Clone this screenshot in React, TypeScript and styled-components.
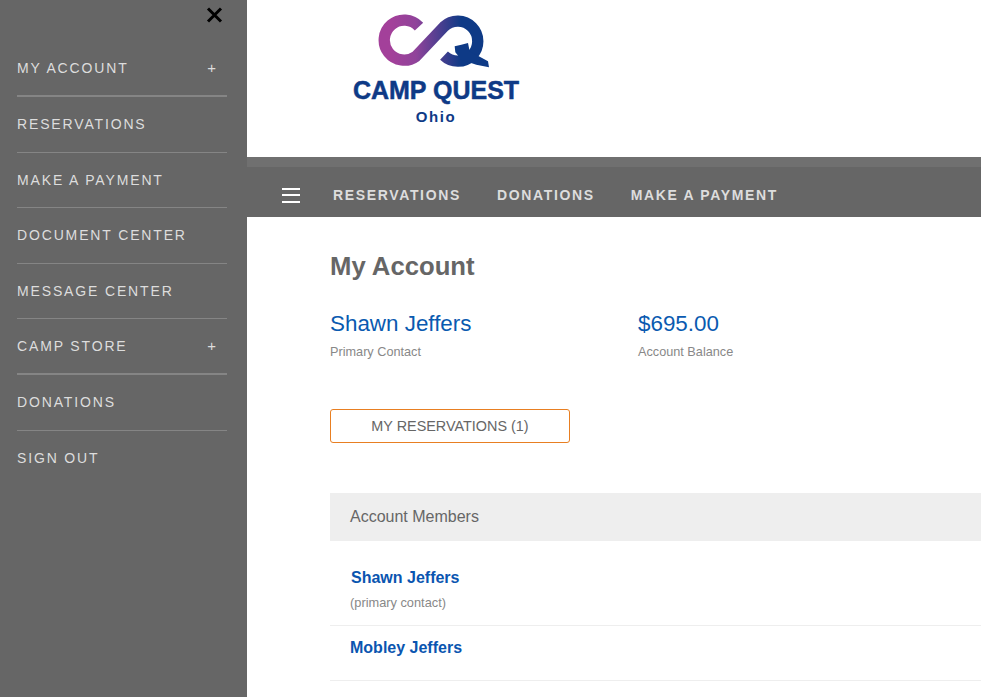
import type { FC } from "react";
import styled, { createGlobalStyle } from "styled-components";

const GlobalStyle = createGlobalStyle`
  html, body {
    margin: 0;
    padding: 0;
    height: 100%;
    overflow: hidden;
    background: #fff;
    font-family: "Liberation Sans", Arial, sans-serif;
  }
  * { box-sizing: border-box; }
`;

const sideItems = [
  { label: "MY ACCOUNT", expandable: true },
  { label: "RESERVATIONS" },
  { label: "MAKE A PAYMENT" },
  { label: "DOCUMENT CENTER" },
  { label: "MESSAGE CENTER" },
  { label: "CAMP STORE", expandable: true },
  { label: "DONATIONS" },
  { label: "SIGN OUT", last: true },
];

const LogoMark: FC = () => (
  <svg width="112" height="62" viewBox="0 0 336 186" aria-hidden="true">
    <defs>
      <linearGradient id="cq" gradientUnits="userSpaceOnUse" x1="40" y1="0" x2="250" y2="0">
        <stop offset="0" stopColor="#a3409a" />
        <stop offset="0.35" stopColor="#90439a" />
        <stop offset="1" stopColor="#0e3a86" />
      </linearGradient>
    </defs>
    <path
      d="M123 38 A60 60 0 1 0 114 127 L198 38 A60 60 0 1 1 198 125"
      fill="none"
      stroke="url(#cq)"
      strokeWidth="34"
    />
    <path
      d="M230 97 L250 92 L270 87 L275 112 L330 142 L333 160 L295 152 L250 137 L232 115 Z"
      fill="#0e3a86"
    />
  </svg>
);

const App: FC = () => {
  return (
    <Page>
      <GlobalStyle />
      <Sidebar>
        <CloseRow>
          <svg width="17" height="16" viewBox="0 0 17 16" aria-hidden="true">
            <path d="M2 1.5 L15 14.5 M15 1.5 L2 14.5" stroke="#000" strokeWidth="3" fill="none" />
          </svg>
        </CloseRow>
        {sideItems.map((item) => (
          <SideItem key={item.label} $expandable={item.expandable} $last={item.last}>
            <span>{item.label}</span>
            {item.expandable && <Plus>+</Plus>}
          </SideItem>
        ))}
      </Sidebar>

      <Main>
        <Header>
          <Logo>
            <LogoMark />
            <LogoName>CAMP QUEST</LogoName>
            <LogoState>Ohio</LogoState>
          </Logo>
        </Header>
        <Band />
        <NavBar>
          <Burger>
            <i />
            <i />
            <i />
          </Burger>
          <NavLink>RESERVATIONS</NavLink>
          <NavLink>DONATIONS</NavLink>
          <NavLink>MAKE A PAYMENT</NavLink>
        </NavBar>

        <Content>
          <Title>My Account</Title>
          <Stats>
            <Stat>
              <StatValue>Shawn Jeffers</StatValue>
              <StatLabel>Primary Contact</StatLabel>
            </Stat>
            <Stat>
              <StatValue>$695.00</StatValue>
              <StatLabel>Account Balance</StatLabel>
            </Stat>
          </Stats>
          <OutlineButton>MY RESERVATIONS (1)</OutlineButton>
          <SectionHead>Account Members</SectionHead>
          <MemberRow $height={85}>
            <MemberName $indent={21}>Shawn Jeffers</MemberName>
            <MemberNote>(primary contact)</MemberNote>
          </MemberRow>
          <MemberRow $height={55}>
            <MemberName $indent={20}>Mobley Jeffers</MemberName>
          </MemberRow>
        </Content>
      </Main>
    </Page>
  );
};

export default App;

const Page = styled.div`
  display: flex;
  width: 981px;
  height: 697px;
  overflow: hidden;
`;

const Sidebar = styled.aside`
  flex: 0 0 247px;
  background: #666;
  padding: 0 20px 0 17px;
`;

const CloseRow = styled.div`
  height: 41px;
  display: flex;
  justify-content: flex-end;
  align-items: flex-start;
  padding-top: 7px;
  padding-right: 4px;
`;

const SideItem = styled.div<{ $expandable?: boolean; $last?: boolean }>`
  height: ${(p) => (p.$expandable ? "56px" : "55.5px")};
  display: flex;
  align-items: center;
  justify-content: space-between;
  padding-right: 11px;
  color: #ddd;
  font-size: 14px;
  letter-spacing: 1.85px;
  border-bottom: ${(p) => (p.$last ? "none" : p.$expandable ? "2px solid #858585" : "1px solid #858585")};
`;

const Plus = styled.span`
  font-size: 15px;
  line-height: 14px;
  letter-spacing: 0;
`;

const Main = styled.main`
  flex: 1;
  min-width: 0;
`;

const Header = styled.header`
  height: 157px;
  padding: 14px 0 0 106px;
`;

const Logo = styled.div`
  width: 166px;
  display: flex;
  flex-direction: column;
  align-items: center;
  color: #0e3a86;
  font-weight: 700;
  & > svg {
    margin-left: -4px;
  }
`;

const LogoName = styled.div`
  margin-top: 1px;
  font-size: 25px;
  line-height: 26px;
  letter-spacing: 0;
  white-space: nowrap;
  -webkit-text-stroke: 0.5px #0e3a86;
`;

const LogoState = styled.div`
  margin-top: 5px;
  font-size: 15px;
  line-height: 18px;
  letter-spacing: 1.6px;
`;

const Band = styled.div`
  height: 10px;
  background: #707070;
`;

const NavBar = styled.nav`
  height: 50px;
  background: #666;
  display: flex;
  align-items: center;
  padding: 6px 0 0 35px;
  gap: 36px;
`;

const Burger = styled.div`
  width: 18px;
  margin-right: -3px;
  display: flex;
  flex-direction: column;
  gap: 4.5px;
  & > i {
    display: block;
    height: 2px;
    background: #fff;
  }
`;

const NavLink = styled.span`
  color: #ddd;
  font-size: 14px;
  font-weight: 700;
  letter-spacing: 1.65px;
`;

const Content = styled.div`
  padding: 32px 0 0 83px;
`;

const Title = styled.h1`
  margin: 0;
  font-size: 25.7px;
  line-height: 34px;
  font-weight: 700;
  color: #666;
`;

const Stats = styled.div`
  display: flex;
  margin-top: 27px;
`;

const Stat = styled.div`
  width: 308px;
`;

const StatValue = styled.div`
  font-size: 22.4px;
  line-height: 28px;
  color: #0a5ab0;
`;

const StatLabel = styled.div`
  margin-top: 6px;
  font-size: 12.7px;
  line-height: 16px;
  color: #888;
`;

const OutlineButton = styled.button`
  display: block;
  width: 240px;
  height: 34px;
  margin-top: 49px;
  padding: 0;
  background: #fff;
  border: 1px solid #e87f22;
  border-radius: 3px;
  color: #666;
  font-family: inherit;
  font-size: 14.4px;
`;

const SectionHead = styled.div`
  margin-top: 50px;
  height: 48px;
  display: flex;
  align-items: center;
  padding-left: 20px;
  background: #eee;
  color: #666;
  font-size: 16px;
`;

const MemberRow = styled.div<{ $height: number }>`
  height: ${(p) => p.$height}px;
  padding: 28px 0 0 20px;
  border-bottom: 1px solid #eee;
  &:last-child {
    padding-top: 13px;
  }
`;

const MemberName = styled.div<{ $indent: number }>`
  margin-left: ${(p) => p.$indent - 20}px;
  font-size: 16px;
  line-height: 18px;
  font-weight: 700;
  color: #0a55b0;
`;

const MemberNote = styled.div`
  margin-top: 8px;
  font-size: 12.8px;
  line-height: 16px;
  color: #888;
`;
